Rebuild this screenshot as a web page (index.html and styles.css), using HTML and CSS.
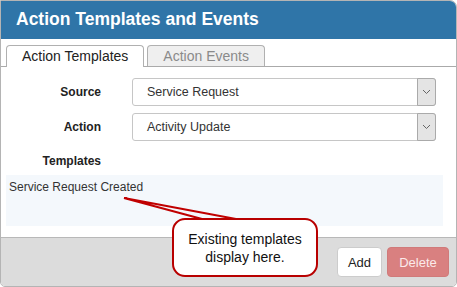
FILE: index.html
```html
<!DOCTYPE html>
<html>
<head>
<meta charset="utf-8">
<link rel="stylesheet" href="styles.css">
</head>
<body>
<div class="panel">
  <div class="header">Action Templates and Events</div>
  <div class="content">
    <div class="tabs">
      <div class="tab active">Action Templates</div>
      <div class="tab">Action Events</div>
    </div>
    <div class="form">
      <div class="label">Source</div>
      <div class="select"><span class="value">Service Request</span><span class="arrow"><svg width="9" height="6" viewBox="0 0 9 6"><path d="M1 1 L4.5 4.5 L8 1" fill="none" stroke="#666" stroke-width="1"/></svg></span></div>
      <div class="label">Action</div>
      <div class="select"><span class="value">Activity Update</span><span class="arrow"><svg width="9" height="6" viewBox="0 0 9 6"><path d="M1 1 L4.5 4.5 L8 1" fill="none" stroke="#666" stroke-width="1"/></svg></span></div>
      <div class="label tlabel">Templates</div>
      <div></div>
    </div>
    <div class="list">
      <div class="item">Service Request Created</div>
    </div>
  </div>
  <div class="footer">
    <button class="btn add">Add</button>
    <button class="btn delete">Delete</button>
  </div>
  <svg class="tail" width="130" height="30" viewBox="0 0 130 30">
    <path d="M85 26 L7 5 L119 26" fill="none" stroke="#c00000" stroke-width="2" stroke-linejoin="miter"/>
  </svg>
  <div class="callout">Existing templates<br>display here.</div>
</div>
</body>
</html>
```

FILE: styles.css
```css
* { box-sizing: border-box; }
html, body { margin: 0; padding: 0; background: #fff; }
body { font-family: "Liberation Sans", Arial, sans-serif; }

.panel {
  position: relative;
  width: 457px;
  height: 287px;
  border: 1px solid #b4b4b4;
  border-radius: 0 7px 5px 5px;
  overflow: hidden;
  display: flex;
  flex-direction: column;
}

.header {
  background: #2f75a8;
  color: #fff;
  font-weight: bold;
  font-size: 17.5px;
  height: 38px;
  padding: 8px 0 0 15px;
  flex: none;
}

.content {
  flex: 1;
  background: #fff;
  display: flex;
  flex-direction: column;
}

.tabs {
  display: flex;
  gap: 3px;
  padding: 6px 0 0 5px;
  border-bottom: 1px solid #aaa;
  height: 28px;
}

.tab {
  height: 21px;
  border: 1px solid #b0b0b0;
  border-bottom: none;
  border-radius: 4px 4px 0 0;
  background: #efefef;
  color: #8a8a8a;
  font-size: 14px;
  line-height: 20px;
  padding: 0 15px;
}

.tab.active {
  background: #fff;
  color: #222;
  height: 22px;
  margin-bottom: -1px;
}

.form {
  display: grid;
  grid-template-columns: 100px 304px;
  column-gap: 31px;
  row-gap: 7px;
  padding-top: 11px;
}

.label {
  text-align: right;
  font-weight: bold;
  font-size: 12px;
  color: #222;
  line-height: 28px;
}

.tlabel { line-height: 14px; padding-top: 6px; }

.select {
  height: 28px;
  border: 1px solid #c6c6c6;
  border-radius: 3px;
  display: flex;
  align-items: stretch;
  font-size: 12.5px;
  color: #333;
}

.select .value { flex: 1; padding-left: 14px; line-height: 26px; }

.select .arrow {
  width: 19px;
  margin: -1px -1px -1px 0;
  background: #e4e4e4;
  border: 1px solid #aaa;
  border-radius: 0 3px 3px 0;
  display: flex;
  align-items: center;
  justify-content: center;
}

.list {
  margin: 7px 13px 0 5px;
  height: 51px;
  background: #f4f8fc;
  padding: 5px 3px;
}

.item { font-size: 12px; color: #333; }

.footer {
  flex: none;
  height: 49px;
  background: #dcdcdc;
  border-top: 1px solid #b8b8b8;
  display: flex;
  justify-content: flex-end;
  align-items: flex-start;
  gap: 5px;
  padding: 9px 7px 0 0;
}

.btn {
  height: 30px;
  border-radius: 4px;
  font-family: "Liberation Sans", Arial, sans-serif;
  font-size: 13px;
  padding: 0;
}

.btn.add { width: 45px; background: #fff; border: 1px solid #ccc; color: #222; }
.btn.delete { width: 62px; background: #d98080; border: 1px solid #d07a7a; color: #fbeaea; }

.tail {
  position: absolute;
  left: 116px;
  top: 192px;
}

.callout {
  position: absolute;
  left: 171px;
  top: 217px;
  width: 146px;
  height: 59px;
  background: #fff;
  border: 2px solid #b80000;
  border-radius: 13px;
  text-align: center;
  font-size: 14px;
  line-height: 18px;
  color: #111;
  padding-top: 10px;
}
```
